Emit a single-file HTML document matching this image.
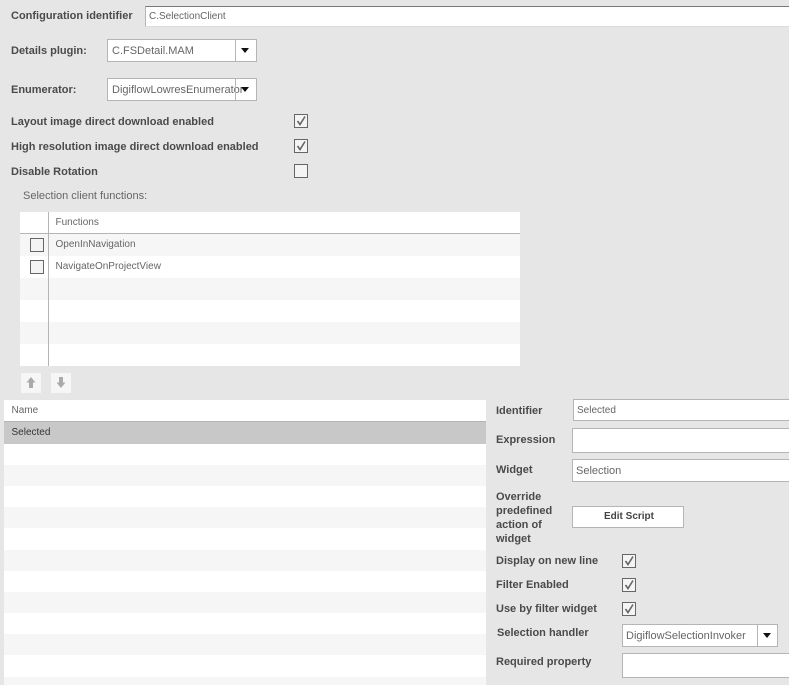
<!DOCTYPE html>
<html>
<head>
<meta charset="utf-8">
<style>
html,body{margin:0;padding:0}
body{width:789px;height:685px;overflow:hidden;position:relative;background:#e6e6e6;font-family:"Liberation Sans",sans-serif;color:#555}
.a{position:absolute;white-space:nowrap}
.l{position:absolute;white-space:nowrap;font-size:11px;font-weight:bold;color:#4a4a4a;line-height:14px;margin-top:1px}
.t{position:absolute;white-space:nowrap;font-size:10px;color:#666;line-height:14px;margin-top:1px}
.i{position:absolute;background:#fff;border:1px solid #b5b5b5;box-sizing:border-box;font-size:11px;color:#666;white-space:nowrap;overflow:hidden}
.c{position:absolute;width:14px;height:14px;box-sizing:border-box;background:#f4f4f4;border:1px solid #666}
.c svg{position:absolute;left:0;top:0}
.r{position:absolute;background:#f6f6f6}
.w{position:absolute;background:#fff}
.tri{position:absolute;width:0;height:0;border-left:4px solid transparent;border-right:4px solid transparent;border-top:5px solid #111}
.d{position:absolute;width:1px;background:#b5b5b5}
</style>
</head>
<body>
<div class="l" style="left:11px;top:8px">Configuration identifier</div>
<div class="i" style="left:145px;top:6px;width:660px;height:21px;border-top-color:#777;border-bottom-color:#ddd;font-size:10px;line-height:19px;padding-left:3px">C.SelectionClient</div>

<div class="l" style="left:11px;top:43px">Details plugin:</div>
<div class="i" style="left:107px;top:39px;width:150px;height:23px;line-height:22px;padding-left:4px">C.FSDetail.MAM</div>
<div class="d" style="left:235px;top:40px;height:21px"></div>
<div class="tri" style="left:241px;top:48px"></div>

<div class="l" style="left:11px;top:82px">Enumerator:</div>
<div class="i" style="left:107px;top:78px;width:150px;height:23px;line-height:22px;padding-left:4px">DigiflowLowresEnumerator</div>
<div class="d" style="left:235px;top:79px;height:21px"></div>
<div class="tri" style="left:241px;top:87px"></div>

<div class="l" style="left:11px;top:114px">Layout image direct download enabled</div>
<div class="c" style="left:294px;top:114px"><svg width="12" height="12" viewBox="0 0 12 12"><path d="M2.5 6 L5 9.5 L10 1.5" fill="none" stroke="#666" stroke-width="1.6"/></svg></div>
<div class="l" style="left:11px;top:139px">High resolution image direct download enabled</div>
<div class="c" style="left:294px;top:139px"><svg width="12" height="12" viewBox="0 0 12 12"><path d="M2.5 6 L5 9.5 L10 1.5" fill="none" stroke="#666" stroke-width="1.6"/></svg></div>
<div class="l" style="left:11px;top:164px">Disable Rotation</div>
<div class="c" style="left:294px;top:164px"></div>

<div class="a" style="left:23px;top:189px;font-size:11px;line-height:14px;color:#666">Selection client functions:</div>

<div class="w" style="left:20px;top:212px;width:500px;height:154px"></div>
<div class="a" style="left:20px;top:233px;width:500px;height:1px;background:#b5b5b5"></div>
<div class="r" style="left:20px;top:234px;width:500px;height:22px"></div>
<div class="r" style="left:20px;top:278px;width:500px;height:22px"></div>
<div class="r" style="left:20px;top:322px;width:500px;height:22px"></div>
<div class="d" style="left:48px;top:212px;height:154px"></div>
<div class="t" style="left:55.5px;top:215px">Functions</div>
<div class="t" style="left:55.5px;top:237px">OpenInNavigation</div>
<div class="t" style="left:55.5px;top:259px">NavigateOnProjectView</div>
<div class="c" style="left:30px;top:238px"></div>
<div class="c" style="left:30px;top:260px"></div>

<div class="a" style="left:21px;top:373px;width:20px;height:20px;background:#f6f6f6"><svg width="20" height="20" viewBox="0 0 20 20"><path d="M10 4 L14.5 9.5 H12 V15 H8 V9.5 H5.5 Z" fill="#aaa"/></svg></div>
<div class="a" style="left:51px;top:373px;width:20px;height:20px;background:#f6f6f6"><svg width="20" height="20" viewBox="0 0 20 20"><path d="M10 15 L14.5 9.5 H12 V4 H8 V9.5 H5.5 Z" fill="#aaa"/></svg></div>

<div class="w" style="left:4px;top:400px;width:482px;height:285px"></div>
<div class="a" style="left:4px;top:421px;width:482px;height:1px;background:#b5b5b5"></div>
<div class="a" style="left:4px;top:422px;width:482px;height:22px;background:#c8c8c8"></div>
<div class="r" style="left:4px;top:465px;width:482px;height:21px"></div>
<div class="r" style="left:4px;top:507px;width:482px;height:21px"></div>
<div class="r" style="left:4px;top:550px;width:482px;height:21px"></div>
<div class="r" style="left:4px;top:592px;width:482px;height:21px"></div>
<div class="r" style="left:4px;top:634px;width:482px;height:21px"></div>
<div class="r" style="left:4px;top:677px;width:482px;height:8px"></div>
<div class="t" style="left:11.5px;top:403px">Name</div>
<div class="t" style="left:11.5px;top:425px;color:#333">Selected</div>

<div class="l" style="left:496px;top:403px">Identifier</div>
<div class="i" style="left:573px;top:399px;width:230px;height:22px;font-size:10px;line-height:21px;padding-left:3px">Selected</div>
<div class="l" style="left:496px;top:432px">Expression</div>
<div class="i" style="left:572px;top:428px;width:230px;height:25px"></div>
<div class="l" style="left:496px;top:462px">Widget</div>
<div class="i" style="left:572px;top:459px;width:230px;height:23px;line-height:22px;padding-left:3px">Selection</div>
<div class="l" style="left:496px;top:489px">Override</div>
<div class="l" style="left:496px;top:503px">predefined</div>
<div class="l" style="left:496px;top:517px">action of</div>
<div class="l" style="left:496px;top:531px">widget</div>
<div class="i" style="left:572px;top:506px;width:112px;height:22px;text-align:center;font-size:10px;font-weight:bold;color:#444;line-height:19px;padding-left:2px">Edit Script</div>

<div class="l" style="left:496px;top:553px">Display on new line</div>
<div class="c" style="left:622px;top:554px"><svg width="12" height="12" viewBox="0 0 12 12"><path d="M2.5 6 L5 9.5 L10 1.5" fill="none" stroke="#666" stroke-width="1.6"/></svg></div>
<div class="l" style="left:496px;top:577px">Filter Enabled</div>
<div class="c" style="left:622px;top:578px"><svg width="12" height="12" viewBox="0 0 12 12"><path d="M2.5 6 L5 9.5 L10 1.5" fill="none" stroke="#666" stroke-width="1.6"/></svg></div>
<div class="l" style="left:496px;top:601px">Use by filter widget</div>
<div class="c" style="left:622px;top:602px"><svg width="12" height="12" viewBox="0 0 12 12"><path d="M2.5 6 L5 9.5 L10 1.5" fill="none" stroke="#666" stroke-width="1.6"/></svg></div>
<div class="l" style="left:497px;top:625px">Selection handler</div>
<div class="i" style="left:622px;top:624px;width:156px;height:23px;line-height:22px;padding-left:3px">DigiflowSelectionInvoker</div>
<div class="d" style="left:757px;top:625px;height:21px"></div>
<div class="tri" style="left:763px;top:633px"></div>
<div class="l" style="left:496px;top:654px">Required property</div>
<div class="i" style="left:622px;top:653px;width:180px;height:25px"></div>
</body>
</html>
